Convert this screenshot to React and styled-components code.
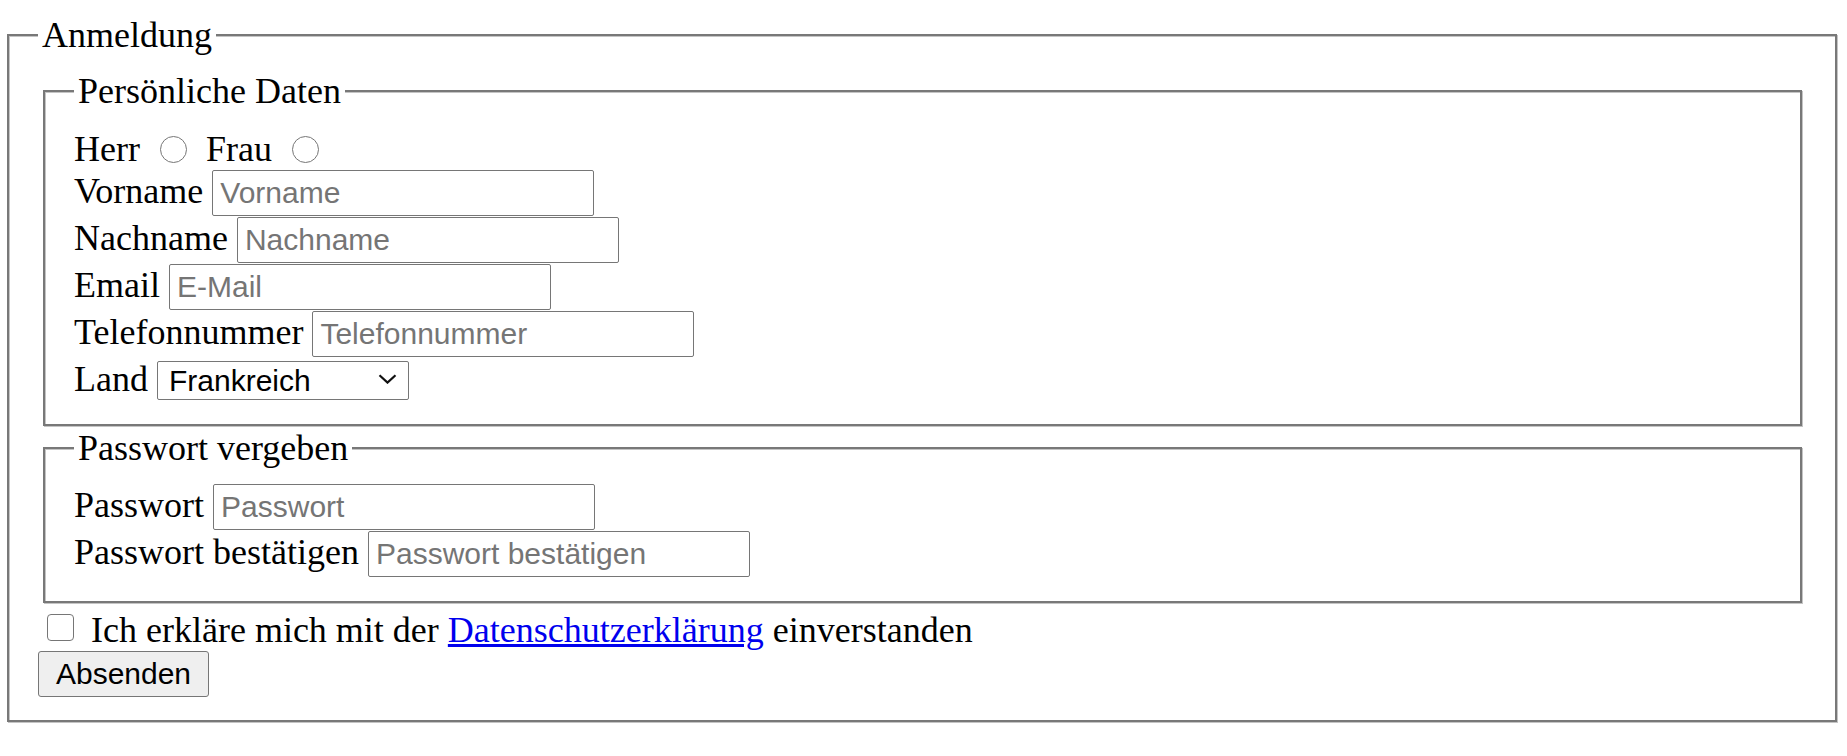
import React from 'react';
import styled, { createGlobalStyle } from 'styled-components';

const GlobalStyle = createGlobalStyle`
  body {
    margin: 0;
    background: #fff;
    color: #000;
    font-family: "Liberation Serif", "Times New Roman", serif;
    font-size: 36px;
  }
`;

const Form = styled.form`
  display: block;
  padding-bottom: 1px;
`;

const FieldBox = styled.fieldset`
  margin: ${(p) => p.$margin};
  padding: ${(p) => p.$padding};
  border: 2px solid #787878;
  box-shadow: inset 1px 1px 0 #c4c4c4, 1px 1px 0 #c4c4c4;
  min-width: 0;
`;

const Legend = styled.legend`
  padding: 0 4px;
  background: #fff;
  line-height: normal;
`;

const Row = styled.div`
  display: flex;
  align-items: ${(p) => p.$align || 'baseline'};
  gap: 9px;
  height: ${(p) => p.$h || 47}px;
`;

const Label = styled.label`
  white-space: nowrap;
`;

const TextField = styled.input`
  box-sizing: border-box;
  width: 382px;
  height: 46px;
  margin: 0;
  padding: 0 7px;
  border: 1px solid #767676;
  border-radius: 2px;
  font-family: "Liberation Sans", Arial, sans-serif;
  font-size: 30px;
  color: #000;
  background: #fff;
  &::placeholder {
    color: #757575;
  }
`;

const Radio = styled.input`
  appearance: none;
  box-sizing: border-box;
  width: 27px;
  height: 27px;
  margin: 0 10px 0 11px;
  border: 1px solid #767676;
  border-radius: 50%;
  background: #fff;
`;

const SelectWrap = styled.span`
  position: relative;
  display: inline-block;
`;

const Select = styled.select`
  appearance: none;
  box-sizing: border-box;
  width: 252px;
  height: 39px;
  margin: 0;
  padding: 0 0 0 11px;
  border: 1px solid #767676;
  border-radius: 2px;
  background: #fff;
  color: #000;
  font-family: "Liberation Sans", Arial, sans-serif;
  font-size: 30px;
`;

const Chevron = styled.svg`
  position: absolute;
  right: 12px;
  top: 16px;
  pointer-events: none;
`;

const CheckRow = styled.div`
  display: flex;
  align-items: center;
  height: 48px;
`;

const CheckBox = styled.input`
  appearance: none;
  box-sizing: border-box;
  width: 27px;
  height: 27px;
  margin: 0 17px 0 9px;
  border: 1px solid #767676;
  border-radius: 4px;
  background: #fff;
`;

const Consent = styled.span`
  padding-top: 6px;
`;

const Link = styled.a`
  color: #0000ee;
  text-decoration: underline;
`;

const ButtonRow = styled.div`
  display: flex;
  height: 46px;
`;

const SubmitButton = styled.button`
  box-sizing: border-box;
  width: 171px;
  height: 46px;
  margin: 0;
  padding: 0;
  border: 1px solid #767676;
  border-radius: 3px;
  background: #efefef;
  color: #000;
  font-family: "Liberation Sans", Arial, sans-serif;
  font-size: 30px;
`;

const personal = [
  { label: 'Vorname', placeholder: 'Vorname', type: 'text' },
  { label: 'Nachname', placeholder: 'Nachname', type: 'text' },
  { label: 'Email', placeholder: 'E-Mail', type: 'email' },
  { label: 'Telefonnummer', placeholder: 'Telefonnummer', type: 'tel' },
];

const passwords = [
  { label: 'Passwort', placeholder: 'Passwort' },
  { label: 'Passwort bestätigen', placeholder: 'Passwort bestätigen' },
];

export default function App() {
  return (
    <>
      <GlobalStyle />
      <Form onSubmit={(e) => e.preventDefault()}>
        <FieldBox $margin="14px 10px 0 7px" $padding="14px 28px 23px 29px">
          <Legend>Anmeldung</Legend>

          <FieldBox $margin="0 5px" $padding="16px 28px 24px 29px">
            <Legend>Persönliche Daten</Legend>
            <Row $h={42} $align="center">
              <Label>Herr</Label>
              <Radio type="radio" name="anrede" value="herr" />
              <Label>Frau</Label>
              <Radio type="radio" name="anrede" value="frau" />
            </Row>
            {personal.map((f) => (
              <Row key={f.label}>
                <Label>{f.label}</Label>
                <TextField type={f.type} placeholder={f.placeholder} />
              </Row>
            ))}
            <Row $h={42}>
              <Label>Land</Label>
              <SelectWrap>
                <Select defaultValue="fr">
                  <option value="fr">Frankreich</option>
                  <option value="de">Deutschland</option>
                  <option value="at">Österreich</option>
                  <option value="ch">Schweiz</option>
                </Select>
                <Chevron width="19" height="10" viewBox="0 0 19 10">
                  <path d="M1.5 1.2 L9.5 8.6 L17.5 1.2" fill="none" stroke="#111" strokeWidth="2.2" />
                </Chevron>
              </SelectWrap>
            </Row>
          </FieldBox>

          <FieldBox $margin="1px 5px 0" $padding="15px 28px 23px 29px">
            <Legend>Passwort vergeben</Legend>
            {passwords.map((f) => (
              <Row key={f.label}>
                <Label>{f.label}</Label>
                <TextField type="password" placeholder={f.placeholder} />
              </Row>
            ))}
          </FieldBox>

          <CheckRow>
            <CheckBox type="checkbox" />
            <Consent>
              Ich erkläre mich mit der <Link href="#">Datenschutzerklärung</Link> einverstanden
            </Consent>
          </CheckRow>

          <ButtonRow>
            <SubmitButton type="submit">Absenden</SubmitButton>
          </ButtonRow>
        </FieldBox>
      </Form>
    </>
  );
}
